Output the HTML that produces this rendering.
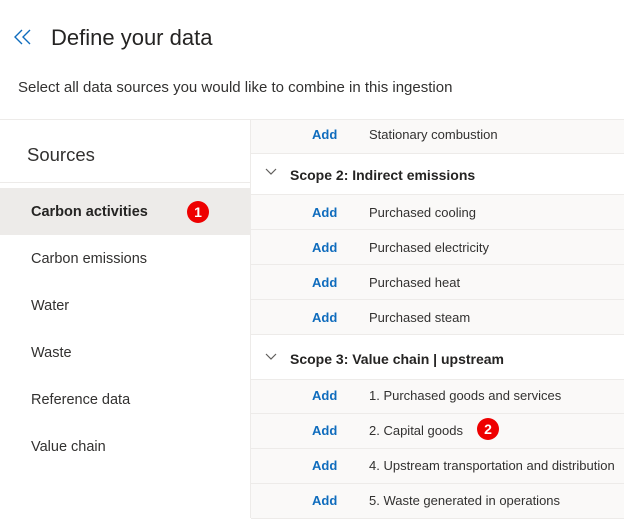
<!DOCTYPE html>
<html><head><style>
body{margin:0;width:624px;height:518px;overflow:hidden;background:#fff;font-family:"Liberation Sans",sans-serif;color:#323130;position:relative}
.a{position:absolute}
.row{position:absolute;left:251px;width:373px;background:#faf9f8;border-bottom:1px solid #edebe9;font-size:13px}
.row .add{position:absolute;left:61px;color:#0f6cbd;font-weight:bold}
.row .t{position:absolute;left:118px}
.hd{position:absolute;left:251px;width:373px;background:#fff;border-bottom:1px solid #edebe9;font-size:14px;font-weight:bold;color:#252423}
.hd .t{position:absolute;left:39px}
.hd svg{position:absolute;left:14px}
.nav{position:absolute;left:31px;font-size:14.5px}
.badge{position:absolute;width:22px;height:22px;border-radius:50%;background:#e00;color:#fff;font-weight:bold;font-size:14px;text-align:center;line-height:22px}
</style></head><body>
<svg class="a" style="left:13px;top:28px" width="20" height="18" viewBox="0 0 20 18"><path d="M9 2 L2 9 L9 16 M17 2 L10 9 L17 16" fill="none" stroke="#0f6cbd" stroke-width="1.4"/></svg>
<div class="a" style="left:51px;top:25px;font-size:22px;color:#252423">Define your data</div>
<div class="a" style="left:18px;top:79px;font-size:15px">Select all data sources you would like to combine in this ingestion</div>
<div class="a" style="left:0;top:119px;width:624px;height:1px;background:#edebe9"></div>
<div class="a" style="left:250px;top:119px;width:1px;height:399px;background:#edebe9"></div>
<div class="a" style="left:27px;top:144px;font-size:18.5px">Sources</div>
<div class="a" style="left:0;top:182px;width:250px;height:1px;background:#edebe9"></div>
<div class="a" style="left:0;top:188px;width:250px;height:47px;background:#edebe9"></div>
<div class="nav" style="top:204px;font-weight:bold;color:#252423">Carbon activities</div>
<div class="badge" style="left:187px;top:201px">1</div>
<div class="nav" style="top:251px">Carbon emissions</div>
<div class="nav" style="top:298px">Water</div>
<div class="nav" style="top:345px">Waste</div>
<div class="nav" style="top:392px">Reference data</div>
<div class="nav" style="top:439px">Value chain</div>

<div class="row" style="top:120px;height:33px"><span class="add" style="top:7px">Add</span><span class="t" style="top:7px">Stationary combustion</span></div>
<div class="hd" style="top:154px;height:40px"><svg style="top:14px" width="12" height="8"><path d="M1 1 L6 6 L11 1" fill="none" stroke="#605e5c" stroke-width="1.2"/></svg><span class="t" style="top:13px">Scope 2: Indirect emissions</span></div>
<div class="row" style="top:195px;height:34px"><span class="add" style="top:10px">Add</span><span class="t" style="top:10px">Purchased cooling</span></div>
<div class="row" style="top:230px;height:34px"><span class="add" style="top:10px">Add</span><span class="t" style="top:10px">Purchased electricity</span></div>
<div class="row" style="top:265px;height:34px"><span class="add" style="top:10px">Add</span><span class="t" style="top:10px">Purchased heat</span></div>
<div class="row" style="top:300px;height:34px"><span class="add" style="top:10px">Add</span><span class="t" style="top:10px">Purchased steam</span></div>
<div class="hd" style="top:335px;height:44px"><svg style="top:18px" width="12" height="8"><path d="M1 1 L6 6 L11 1" fill="none" stroke="#605e5c" stroke-width="1.2"/></svg><span class="t" style="top:16px">Scope 3: Value chain | upstream</span></div>
<div class="row" style="top:380px;height:33px"><span class="add" style="top:8px">Add</span><span class="t" style="top:8px">1. Purchased goods and services</span></div>
<div class="row" style="top:414px;height:34px"><span class="add" style="top:9px">Add</span><span class="t" style="top:9px">2. Capital goods</span></div>
<div class="badge" style="left:477px;top:418px">2</div>
<div class="row" style="top:449px;height:34px"><span class="add" style="top:9px">Add</span><span class="t" style="top:9px">4. Upstream transportation and distribution</span></div>
<div class="row" style="top:484px;height:34px"><span class="add" style="top:9px">Add</span><span class="t" style="top:9px">5. Waste generated in operations</span></div>
</body></html>
